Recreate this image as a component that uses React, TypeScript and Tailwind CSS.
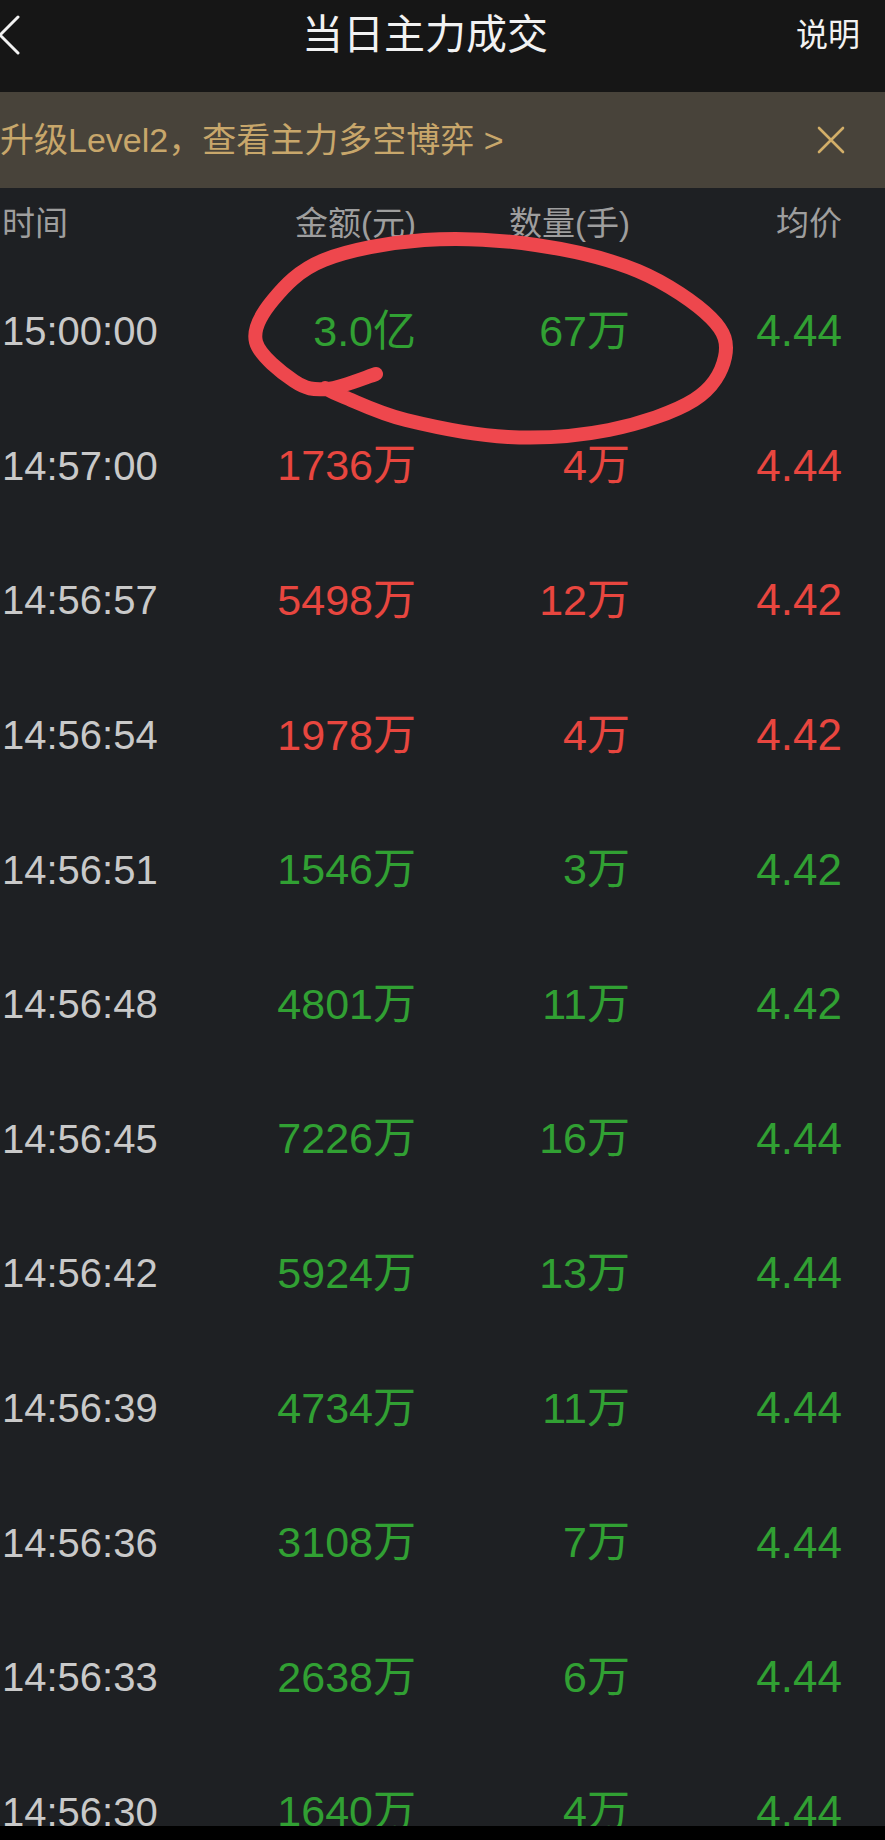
import React from 'react';

type Row = {
  time: string;
  amount: string;
  volume: string;
  price: string;
  up: boolean;
};

const rows: Row[] = [
  { time: '15:00:00', amount: '3.0亿', volume: '67万', price: '4.44', up: false },
  { time: '14:57:00', amount: '1736万', volume: '4万', price: '4.44', up: true },
  { time: '14:56:57', amount: '5498万', volume: '12万', price: '4.42', up: true },
  { time: '14:56:54', amount: '1978万', volume: '4万', price: '4.42', up: true },
  { time: '14:56:51', amount: '1546万', volume: '3万', price: '4.42', up: false },
  { time: '14:56:48', amount: '4801万', volume: '11万', price: '4.42', up: false },
  { time: '14:56:45', amount: '7226万', volume: '16万', price: '4.44', up: false },
  { time: '14:56:42', amount: '5924万', volume: '13万', price: '4.44', up: false },
  { time: '14:56:39', amount: '4734万', volume: '11万', price: '4.44', up: false },
  { time: '14:56:36', amount: '3108万', volume: '7万', price: '4.44', up: false },
  { time: '14:56:33', amount: '2638万', volume: '6万', price: '4.44', up: false },
  { time: '14:56:30', amount: '1640万', volume: '4万', price: '4.44', up: false },
];

// hand drawn marker loop around the first row
const loop: [number, number][] = [
  [376, 374],
  [327, 389],
  [294, 381],
  [256, 342],
  [273, 300],
  [324, 260],
  [424, 240],
  [536, 245],
  [638, 271],
  [711, 318],
  [725, 357],
  [694, 400],
  [609, 430],
  [508, 437],
  [406, 420],
  [344, 397],
  [325, 388],
];

function smoothPath(pts: [number, number][]) {
  let d = `M ${pts[0][0]} ${pts[0][1]}`;
  for (let i = 0; i < pts.length - 1; i++) {
    const p0 = pts[i - 1] || pts[i];
    const p1 = pts[i];
    const p2 = pts[i + 1];
    const p3 = pts[i + 2] || p2;
    const c1x = p1[0] + (p2[0] - p0[0]) / 6;
    const c1y = p1[1] + (p2[1] - p0[1]) / 6;
    const c2x = p2[0] - (p3[0] - p1[0]) / 6;
    const c2y = p2[1] - (p3[1] - p1[1]) / 6;
    d += ` C ${c1x} ${c1y} ${c2x} ${c2y} ${p2[0]} ${p2[1]}`;
  }
  return d;
}

const font = { fontFamily: '"Liberation Sans", "Noto Sans CJK SC", sans-serif' };

export default function App() {
  return (
    <div className="relative flex h-[1840px] w-[885px] flex-col overflow-hidden bg-[#1e2023]" style={font}>
      {/* top bar */}
      <div className="flex h-[92px] shrink-0 items-start bg-[#161616]">
        <div className="flex h-[70px] w-full items-center">
          <div className="flex w-[55px] items-center">
            <svg width="24" height="42" viewBox="0 0 24 42" className="-ml-[3px]">
              <polyline points="21,3 3,21 21,39" fill="none" stroke="#f2f2f2" strokeWidth="3" strokeLinecap="round" strokeLinejoin="round" />
            </svg>
          </div>
          <div className="flex-1 text-center text-[41px] leading-none text-[#f2f2f2]">当日主力成交</div>
          <div className="w-[90px] pr-[25px] text-right text-[32px] leading-none text-[#f2f2f2]">说明</div>
        </div>
      </div>

      {/* level2 banner */}
      <div className="flex h-[96px] shrink-0 items-center justify-between bg-[#48433a] pr-[40px]">
        <div className="text-[34px] leading-none text-[#c8a76b]">升级Level2，查看主力多空博弈 &gt;</div>
        <svg width="28" height="28" viewBox="0 0 28 28">
          <path d="M2 2 L26 26 M26 2 L2 26" stroke="#d2ae68" strokeWidth="2.6" strokeLinecap="round" />
        </svg>
      </div>

      {/* table */}
      <div className="min-h-0 flex-1 overflow-hidden">
        <div className="grid h-[76px] grid-cols-[250px_164px_214px_212px] items-center pb-[6px] pl-[2px] text-[33px] leading-none text-[#9e9e9e]">
          <div>时间</div>
          <div className="text-right">金额(元)</div>
          <div className="text-right">数量(手)</div>
          <div className="text-right">均价</div>
        </div>
        {rows.map((r) => {
          const color = r.up ? 'text-[#e8463f]' : 'text-[#31a033]';
          return (
            <div key={r.time} className="grid h-[134.6px] grid-cols-[250px_164px_214px_212px] items-center pl-[2px] leading-none">
              <div className="text-[40px] text-[#c9c9c9]">{r.time}</div>
              <div className={`text-right text-[43px] ${color}`}>{r.amount}</div>
              <div className={`text-right text-[43px] ${color}`}>{r.volume}</div>
              <div className={`text-right text-[44px] ${color}`}>{r.price}</div>
            </div>
          );
        })}
      </div>
      <div className="h-[14px] shrink-0 bg-black" />

      {/* red marker annotation */}
      <svg className="pointer-events-none absolute left-0 top-0" width="885" height="1840" viewBox="0 0 885 1840">
        <path d={smoothPath(loop)} fill="none" stroke="#ee474d" strokeWidth="14" strokeLinecap="round" strokeLinejoin="round" />
      </svg>
    </div>
  );
}
